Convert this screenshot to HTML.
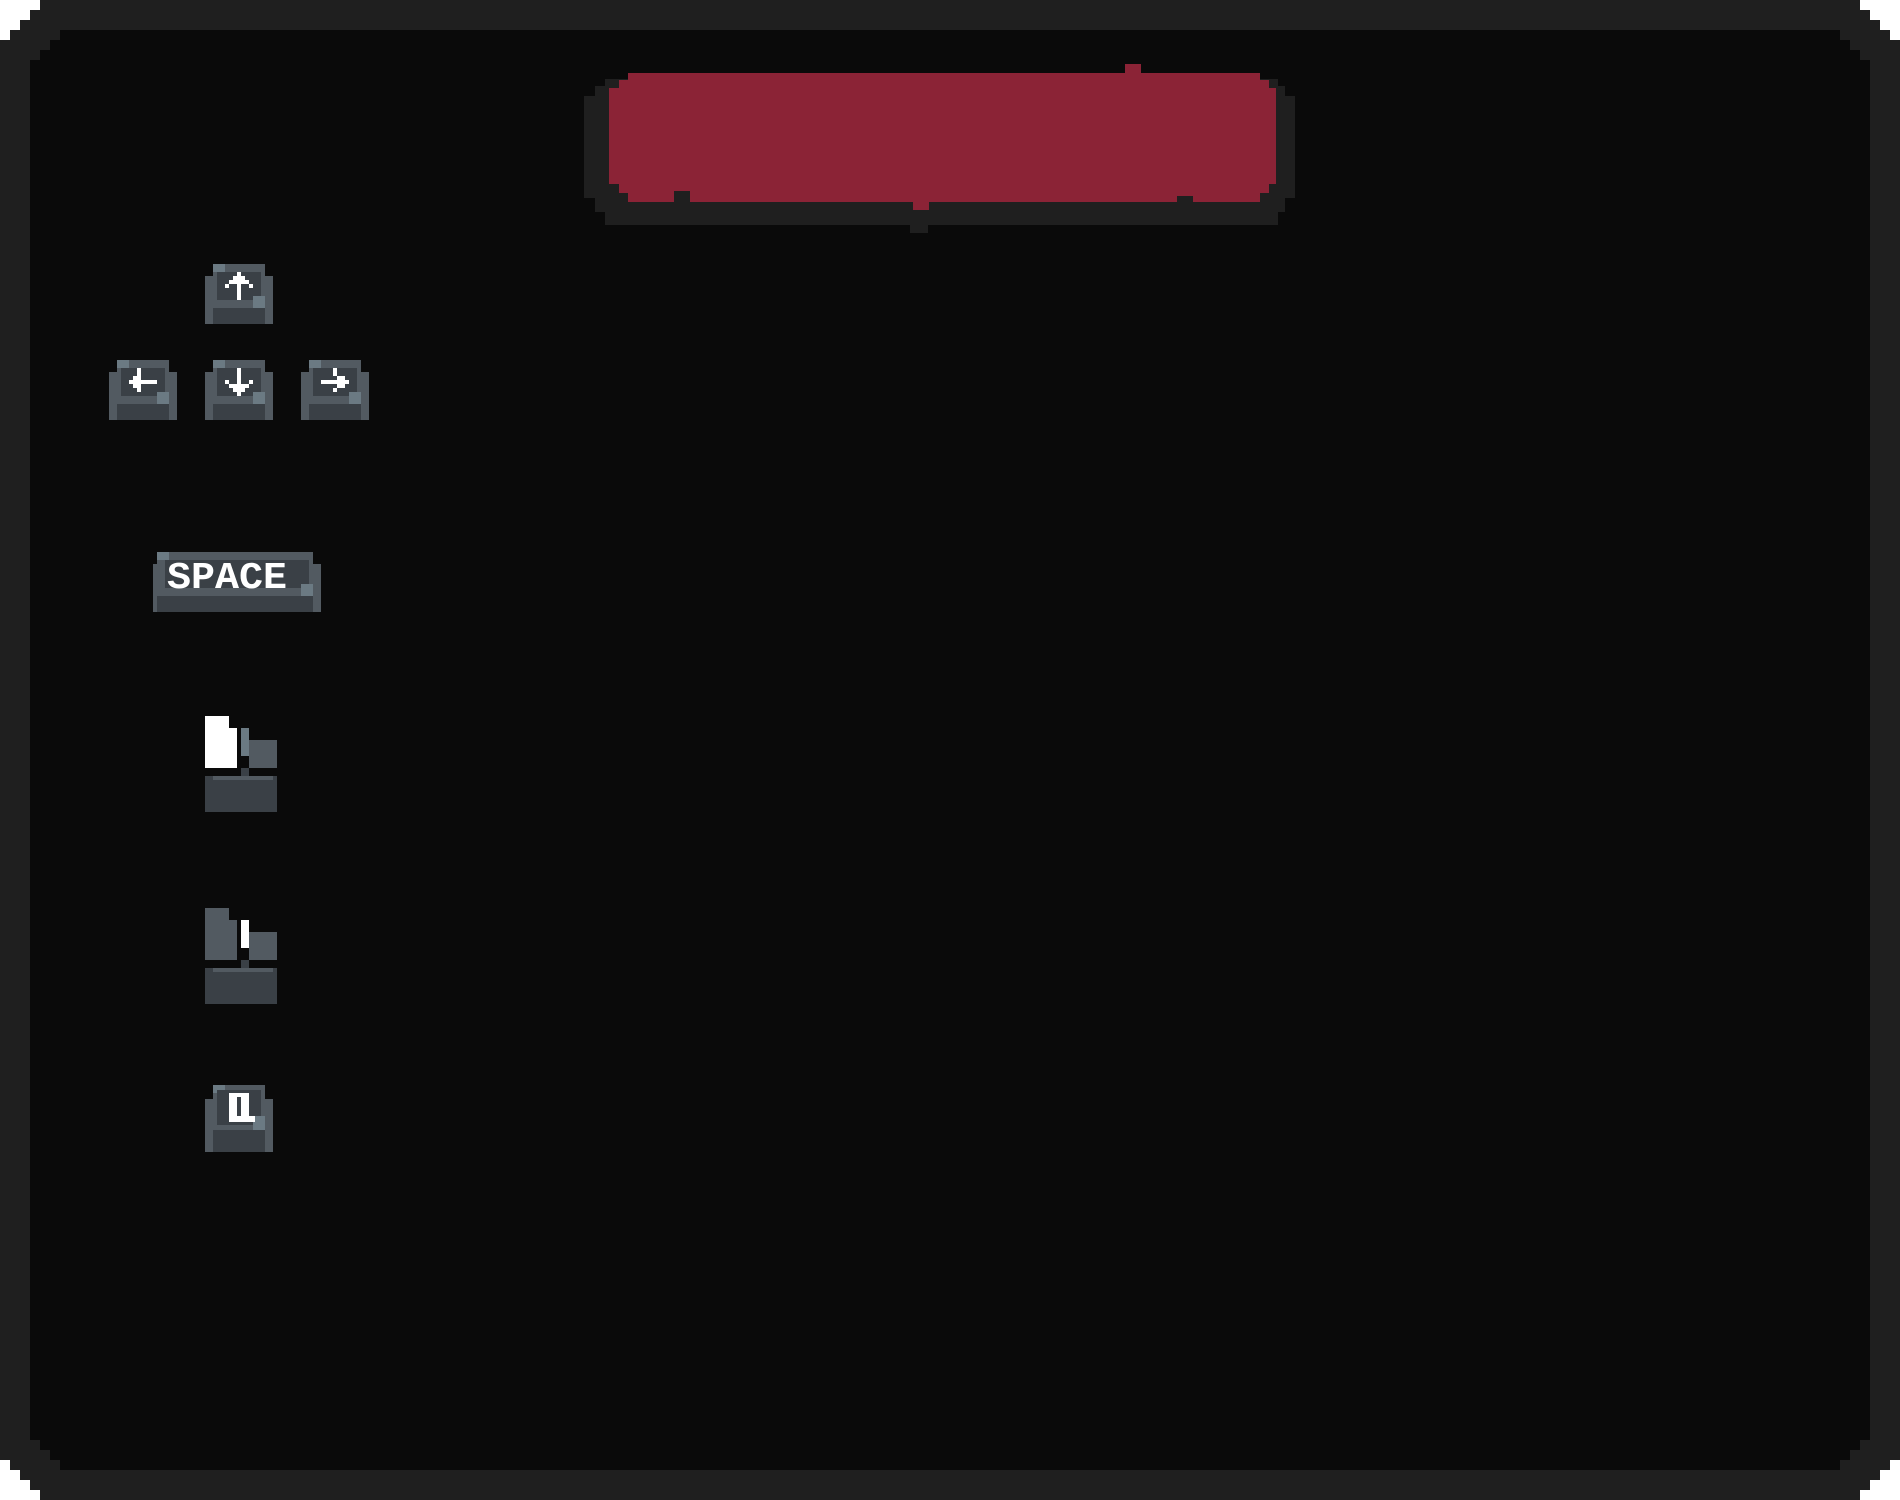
<!DOCTYPE html>
<html><head><meta charset="utf-8"><style>
html,body{margin:0;padding:0;background:#fff;width:1900px;height:1500px;overflow:hidden}
svg{display:block}
</style></head><body>
<svg width="1900" height="1500" viewBox="0 0 1900 1500" shape-rendering="crispEdges">
<defs>
<g id="key">
<rect x="8" y="0" width="52" height="12" fill="#525a61"/>
<rect x="0" y="12" width="68" height="48" fill="#525a61"/>
<rect x="8" y="0" width="12" height="8" fill="#6b7a83"/>
<rect x="12" y="8" width="44" height="28" fill="#3a4046"/>
<rect x="48" y="32" width="12" height="12" fill="#6b7a83"/>
<rect x="8" y="44" width="52" height="16" fill="#3a4046"/>
</g>
</defs>
<!-- frame -->
<path d="M40 0H1860V10H1870V20H1880V30H1890V40H1900V1460H1890V1470H1880V1480H1870V1490H1860V1500H40V1490H30V1480H20V1470H10V1460H0V40H10V30H20V20H30V10H40Z" fill="#1f1f1f"/>
<path d="M60 30H1840V40H1850V50H1860V60H1870V1440H1860V1450H1850V1460H1840V1470H60V1460H50V1450H40V1440H30V60H40V50H50V40H60Z" fill="#0a0a0a"/>
<!-- title bar -->
<path d="M605 79H1278V86H1285V96H1295V198H1285V212H1278V225H605V212H595V198H584V96H595V86H605Z" fill="#1f1f1f"/>
<path d="M628 73H1260V80H1269V88H1276V184H1269V193H1260V202H628V193H619V184H609V88H619V80H628Z" fill="#8b2336"/>
<rect x="1125" y="64" width="16" height="10" fill="#8b2336"/>
<rect x="913" y="202" width="16" height="8" fill="#8b2336"/>
<rect x="674" y="191" width="16" height="12" fill="#1f1f1f"/>
<rect x="1177" y="196" width="16" height="8" fill="#1f1f1f"/>
<rect x="910" y="225" width="18" height="8" fill="#1f1f1f"/>
<!-- up -->
<g transform="translate(205,264)"><use href="#key"/>
<rect x="32" y="8" width="4" height="28" fill="#fff"/><rect x="28" y="12" width="12" height="4" fill="#fff"/><rect x="24" y="16" width="20" height="4" fill="#fff"/><rect x="20" y="20" width="4" height="4" fill="#fff"/><rect x="44" y="20" width="4" height="4" fill="#fff"/></g>
<!-- left -->
<g transform="translate(109,360)"><use href="#key"/>
<rect x="20" y="20" width="28" height="4" fill="#fff"/><rect x="24" y="16" width="8" height="12" fill="#fff"/><rect x="28" y="8" width="4" height="8" fill="#fff"/><rect x="28" y="28" width="4" height="4" fill="#fff"/></g>
<!-- down -->
<g transform="translate(205,360)"><use href="#key"/>
<rect x="32" y="8" width="4" height="28" fill="#fff"/><rect x="28" y="24" width="12" height="8" fill="#fff"/><rect x="20" y="20" width="4" height="4" fill="#fff"/><rect x="44" y="20" width="4" height="4" fill="#fff"/><rect x="24" y="24" width="20" height="4" fill="#fff"/></g>
<!-- right -->
<g transform="translate(301,360)"><use href="#key"/>
<rect x="20" y="20" width="28" height="4" fill="#fff"/><rect x="36" y="16" width="8" height="12" fill="#fff"/><rect x="32" y="8" width="4" height="8" fill="#fff"/><rect x="32" y="28" width="4" height="4" fill="#fff"/></g>
<!-- space -->
<g transform="translate(153,552)">
<rect x="4" y="0" width="156" height="12" fill="#525a61"/>
<rect x="0" y="12" width="168" height="48" fill="#525a61"/>
<rect x="4" y="0" width="12" height="8" fill="#6b7a83"/>
<rect x="12" y="8" width="144" height="28" fill="#3a4046"/>
<rect x="148" y="32" width="12" height="12" fill="#6b7a83"/>
<rect x="4" y="44" width="156" height="16" fill="#3a4046"/>
<text x="14" y="36" font-family="Liberation Mono, monospace" font-weight="bold" font-size="38" fill="#fff" textLength="120" lengthAdjust="spacingAndGlyphs">SPACE</text>
</g>
<!-- mouse 1 -->
<g>
<rect x="205" y="716" width="24" height="12" fill="#fff"/><rect x="205" y="728" width="32" height="40" fill="#fff"/>
<rect x="241" y="728" width="8" height="28" fill="#6b7a83"/>
<rect x="249" y="740" width="28" height="28" fill="#525a61"/>
<rect x="241" y="768" width="8" height="8" fill="#3a4046"/>
<rect x="205" y="776" width="72" height="36" fill="#3a4046"/><rect x="213" y="776" width="60" height="4" fill="#525a61"/>
</g>
<!-- mouse 2 -->
<g>
<rect x="205" y="908" width="24" height="12" fill="#525a61"/><rect x="205" y="920" width="32" height="40" fill="#525a61"/>
<rect x="241" y="920" width="8" height="28" fill="#fff"/>
<rect x="249" y="932" width="28" height="28" fill="#525a61"/>
<rect x="241" y="960" width="8" height="8" fill="#3a4046"/>
<rect x="205" y="968" width="72" height="36" fill="#3a4046"/><rect x="213" y="968" width="60" height="4" fill="#525a61"/>
</g>
<!-- Q -->
<g transform="translate(205,1085)">
<rect x="8" y="0" width="52" height="14" fill="#525a61"/>
<rect x="0" y="14" width="68" height="53" fill="#525a61"/>
<rect x="8" y="0" width="12" height="8" fill="#6b7a83"/>
<rect x="12" y="5" width="44" height="35" fill="#3a4046"/>
<rect x="48" y="31" width="12" height="14" fill="#6b7a83"/>
<rect x="8" y="45" width="52" height="22" fill="#3a4046"/>
<rect x="24" y="8" width="20" height="4" fill="#fff"/><rect x="24" y="8" width="8" height="29" fill="#fff"/><rect x="36" y="8" width="8" height="25" fill="#fff"/><rect x="24" y="31" width="26" height="6" fill="#fff"/><rect x="32" y="13" width="4" height="18" fill="#3a4046"/></g>
</svg>
</body></html>
